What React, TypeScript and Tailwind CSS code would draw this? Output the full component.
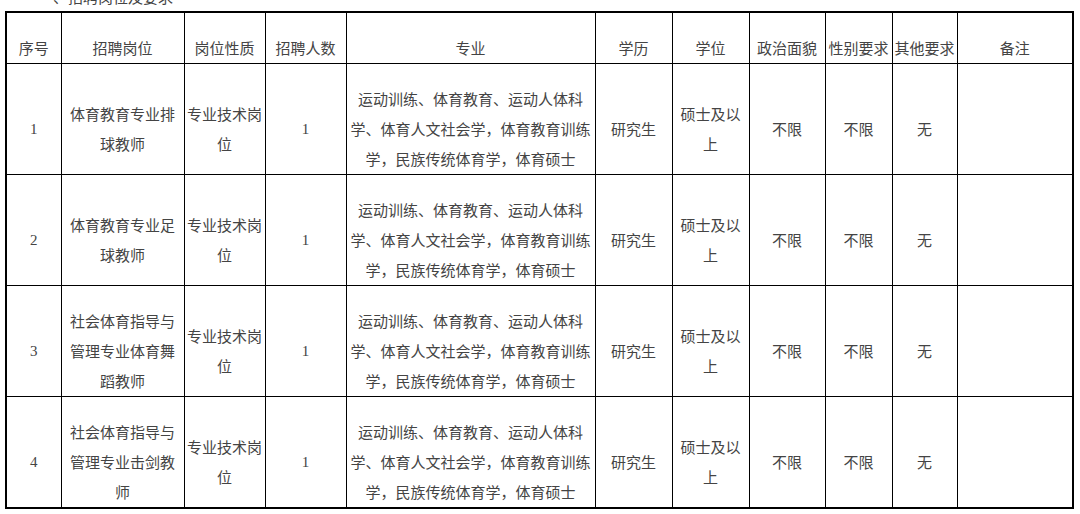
import React from 'react';

// Column widths taken from the screenshot (sum = 1067px)
const COLS = [55, 123, 81, 81, 249, 77, 77, 76, 67, 65, 116];

const HEADERS = [
  '序号',
  '招聘岗位',
  '岗位性质',
  '招聘人数',
  '专业',
  '学历',
  '学位',
  '政治面貌',
  '性别要求',
  '其他要求',
  '备注',
];

const MAJOR = ['运动训练、体育教育、运动人体科', '学、体育人文社会学，体育教育训练', '学，民族传统体育学，体育硕士'];

interface Row {
  no: string;
  post: string[];
}

const ROWS: Row[] = [
  { no: '1', post: ['体育教育专业排', '球教师'] },
  { no: '2', post: ['体育教育专业足', '球教师'] },
  { no: '3', post: ['社会体育指导与', '管理专业体育舞', '蹈教师'] },
  { no: '4', post: ['社会体育指导与', '管理专业击剑教', '师'] },
];

const cell = 'border border-black p-0 pt-[20px] text-center align-middle whitespace-nowrap';

function Lines({ lines }: { lines: string[] }) {
  return (
    <>
      {lines.map((l, i) => (
        <div key={i}>{l}</div>
      ))}
    </>
  );
}

export default function App() {
  return (
    <div
      className="w-[1080px] h-[514px] bg-white text-[#444] text-[15px] leading-[30px] overflow-hidden"
      style={{ fontFamily: '"Noto Sans CJK SC", "Noto Sans", sans-serif' }}
    >
      {/* Section title, cut off by the top edge */}
      <div className="h-[11px] overflow-hidden">
        <div className="pl-[38px] mt-[-18px]">一、招聘岗位及要求</div>
      </div>

      <div className="pl-[5px]">
        <table className="table-fixed border-collapse border-2 border-black w-[1067px]">
          <colgroup>
            {COLS.map((w, i) => (
              <col key={i} style={{ width: w }} />
            ))}
          </colgroup>
          <thead>
            <tr>
              {HEADERS.map((h) => (
                <th key={h} className={`${cell} h-[49px] font-normal`}>
                  {h}
                </th>
              ))}
            </tr>
          </thead>
          <tbody>
            {ROWS.map((r) => (
              <tr key={r.no}>
                <td className={`${cell} h-[110px]`} style={{ fontFamily: '"Liberation Serif", serif' }}>
                  {r.no}
                </td>
                <td className={cell}>
                  <Lines lines={r.post} />
                </td>
                <td className={cell}>
                  <Lines lines={['专业技术岗', '位']} />
                </td>
                <td className={cell} style={{ fontFamily: '"Liberation Serif", serif' }}>
                  1
                </td>
                <td className={cell}>
                  <Lines lines={MAJOR} />
                </td>
                <td className={cell}>研究生</td>
                <td className={cell}>
                  <Lines lines={['硕士及以', '上']} />
                </td>
                <td className={cell}>不限</td>
                <td className={cell}>不限</td>
                <td className={cell}>无</td>
                <td className={cell}></td>
              </tr>
            ))}
          </tbody>
        </table>
      </div>
    </div>
  );
}
